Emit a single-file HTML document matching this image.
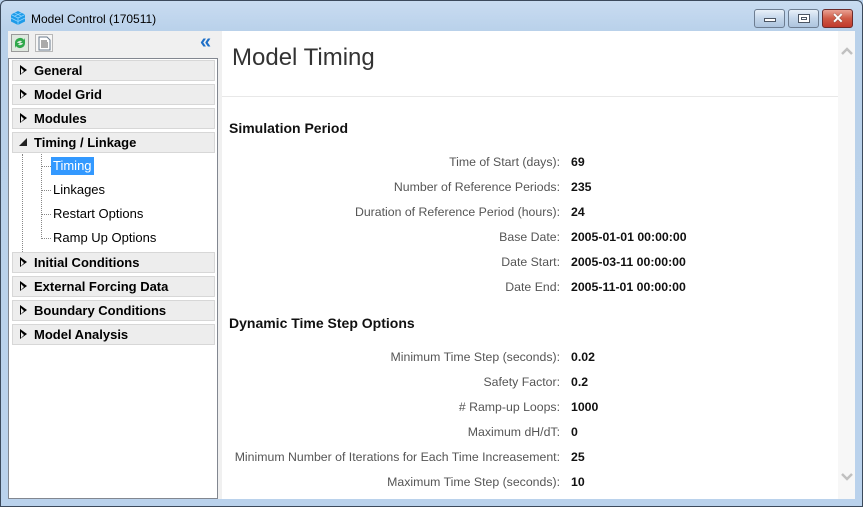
<!DOCTYPE html>
<html><head><style>
*{margin:0;padding:0;box-sizing:border-box}
body{width:863px;height:507px;overflow:hidden;background:#bad2ec;font-family:"Liberation Sans",Arial,sans-serif;position:relative}
.a{position:absolute}
.frame{left:0;top:0;width:863px;height:507px;border:1px solid #3c4a5c;border-radius:6px 6px 0 0;background:linear-gradient(#c9dcf1,#b9d1ea 30px,#bad2ec)}
.btn{top:9px;height:19px;border:1px solid #6d7d91;border-radius:3px;background:linear-gradient(#e8f0f9,#c4d6ea 50%,#adc4de)}
.hdr{left:12px;width:203px;height:21px;background:#ededed;border:1px solid #d7d7d7;font-weight:bold;font-size:13px;line-height:19px;padding-left:21px}
.hdr:before{content:"";position:absolute;left:7px;top:4px;width:0;height:0;border-left:7px solid #000;border-top:5.5px solid transparent;border-bottom:5.5px solid transparent}
.hdr:after{content:"";position:absolute;left:8px;top:6.5px;width:0;height:0;border-left:3.5px solid #ededed;border-top:3px solid transparent;border-bottom:3px solid transparent}
.hdr.open:before{border:none;left:6px;top:5px;border-right:8px solid #222;border-top:8px solid transparent}
.hdr.open:after{display:none}
.sub{left:51px;font-size:13px;line-height:18px;padding:0 2px}
.lbl{width:560px;left:0;text-align:right;font-size:12.3px;color:#555;line-height:14px}
.val{left:571px;font-size:12.3px;font-weight:bold;color:#111;line-height:14px}
.sec{left:229px;font-size:14px;font-weight:bold;color:#111}
</style></head><body>
<div class="a frame"></div>
<svg class="a" style="left:10px;top:10px" width="16" height="16" viewBox="0 0 16 16"><path d="M8 1 L15 4.5 L15 11.5 L8 15 L1 11.5 L1 4.5Z" fill="#1e9be8"/><path d="M1 4.5 L8 8 L15 4.5 M8 8 V15 M4.5 2.8 L11.5 6.2 M11.5 2.8 L4.5 6.2 M1 8 L8 11.5 L15 8" stroke="#8fd3ff" stroke-width=".8" fill="none"/></svg>
<div class="a" style="left:31px;top:12px;font-size:12px;color:#000">Model Control (170511)</div>
<div class="a btn" style="left:754px;width:31px"><div class="a" style="left:9px;top:8px;width:12px;height:4px;background:#fff;border:1px solid #4b5563"></div></div>
<div class="a btn" style="left:788px;width:31px"><div class="a" style="left:9px;top:4px;width:12px;height:9px;border:1px solid #4b5563;background:#fff"><div style="margin:2px;height:3px;border:1px solid #4b5563"></div></div></div>
<div class="a btn" style="left:822px;width:31px;background:linear-gradient(#e9a193,#cf5a45 50%,#c0392b);border-color:#6b2b2b"><div class="a" style="left:9px;top:0;color:#fff;font-weight:bold;font-size:14px;line-height:17px;text-shadow:0 0 1px #333">✕</div></div>
<div class="a" style="left:8px;top:31px;width:214px;height:468px;background:#f0f0f0"></div>
<div class="a" style="left:11px;top:34px;width:18px;height:18px;border:1px solid #9a9a9a;background:#dfe8df"><svg width="16" height="16"><path d="M3 8a5 5 0 0 1 9-3l1-2v5h-5l2-1.5A3.2 3.2 0 0 0 5 8z M13 8a5 5 0 0 1-9 3l-1 2V8h5l-2 1.5A3.2 3.2 0 0 0 11 8z" fill="#2fa84a"/></svg></div>
<div class="a" style="left:35px;top:34px;width:18px;height:18px;border:1px solid #b8b8b8;background:#f6f6f6"><svg width="16" height="16"><path d="M3 2h8l3 3v10H3z" fill="#fff" stroke="#6b7b8c"/><path d="M5 6h6M5 8h7M5 10h7M5 12h7" stroke="#555"/></svg></div>
<div class="a" style="left:200px;top:32px;color:#1e6fc7;font-size:20px;font-weight:bold;line-height:20px">«</div>
<div class="a" style="left:8px;top:58px;width:210px;height:441px;background:#fff;border:1px solid #828790"></div>
<div class="a hdr" style="top:60px">General</div>
<div class="a hdr" style="top:84px">Model Grid</div>
<div class="a hdr" style="top:108px">Modules</div>
<div class="a hdr open" style="top:132px">Timing / Linkage</div>
<div class="a" style="left:22px;top:154px;height:100px;border-left:1px dotted #888"></div>
<div class="a" style="left:41px;top:154px;height:85px;border-left:1px dotted #888"></div>
<div class="a" style="left:42px;top:166px;width:9px;border-top:1px dotted #888"></div>
<div class="a" style="left:42px;top:190px;width:9px;border-top:1px dotted #888"></div>
<div class="a" style="left:42px;top:214px;width:9px;border-top:1px dotted #888"></div>
<div class="a" style="left:42px;top:238px;width:9px;border-top:1px dotted #888"></div>
<div class="a sub" style="top:157px;background:#3399ff;color:#fff">Timing</div>
<div class="a sub" style="top:181px">Linkages</div>
<div class="a sub" style="top:205px">Restart Options</div>
<div class="a sub" style="top:229px">Ramp Up Options</div>
<div class="a hdr" style="top:252px">Initial Conditions</div>
<div class="a hdr" style="top:276px">External Forcing Data</div>
<div class="a hdr" style="top:300px">Boundary Conditions</div>
<div class="a hdr" style="top:324px">Model Analysis</div>
<div class="a" style="left:222px;top:31px;width:633px;height:468px;background:#fff"></div>
<div class="a" style="left:838px;top:31px;width:17px;height:468px;background:#f7f7f7"></div>
<svg class="a" style="left:840px;top:46px" width="14" height="10"><path d="M2 8 L7 3 L12 8" stroke="#c0c0c0" stroke-width="2.5" fill="none"/></svg>
<svg class="a" style="left:840px;top:472px" width="14" height="10"><path d="M2 2 L7 7 L12 2" stroke="#c0c0c0" stroke-width="2.5" fill="none"/></svg>
<div class="a" style="left:232px;top:44px;font-size:24px;color:#333">Model Timing</div>
<div class="a" style="left:222px;top:96px;width:616px;height:1px;background:#e8e8e8"></div>
<div class="a sec" style="top:120px">Simulation Period</div>
<div class="a lbl" style="top:155px">Time of Start (days):</div><div class="a val" style="top:155px">69</div>
<div class="a lbl" style="top:180px">Number of Reference Periods:</div><div class="a val" style="top:180px">235</div>
<div class="a lbl" style="top:205px">Duration of Reference Period (hours):</div><div class="a val" style="top:205px">24</div>
<div class="a lbl" style="top:230px">Base Date:</div><div class="a val" style="top:230px">2005-01-01 00:00:00</div>
<div class="a lbl" style="top:255px">Date Start:</div><div class="a val" style="top:255px">2005-03-11 00:00:00</div>
<div class="a lbl" style="top:280px">Date End:</div><div class="a val" style="top:280px">2005-11-01 00:00:00</div>
<div class="a sec" style="top:315px">Dynamic Time Step Options</div>
<div class="a lbl" style="top:350px">Minimum Time Step (seconds):</div><div class="a val" style="top:350px">0.02</div>
<div class="a lbl" style="top:375px">Safety Factor:</div><div class="a val" style="top:375px">0.2</div>
<div class="a lbl" style="top:400px"># Ramp-up Loops:</div><div class="a val" style="top:400px">1000</div>
<div class="a lbl" style="top:425px">Maximum dH/dT:</div><div class="a val" style="top:425px">0</div>
<div class="a lbl" style="top:450px">Minimum Number of Iterations for Each Time Increasement:</div><div class="a val" style="top:450px">25</div>
<div class="a lbl" style="top:475px">Maximum Time Step (seconds):</div><div class="a val" style="top:475px">10</div>
</body></html>
